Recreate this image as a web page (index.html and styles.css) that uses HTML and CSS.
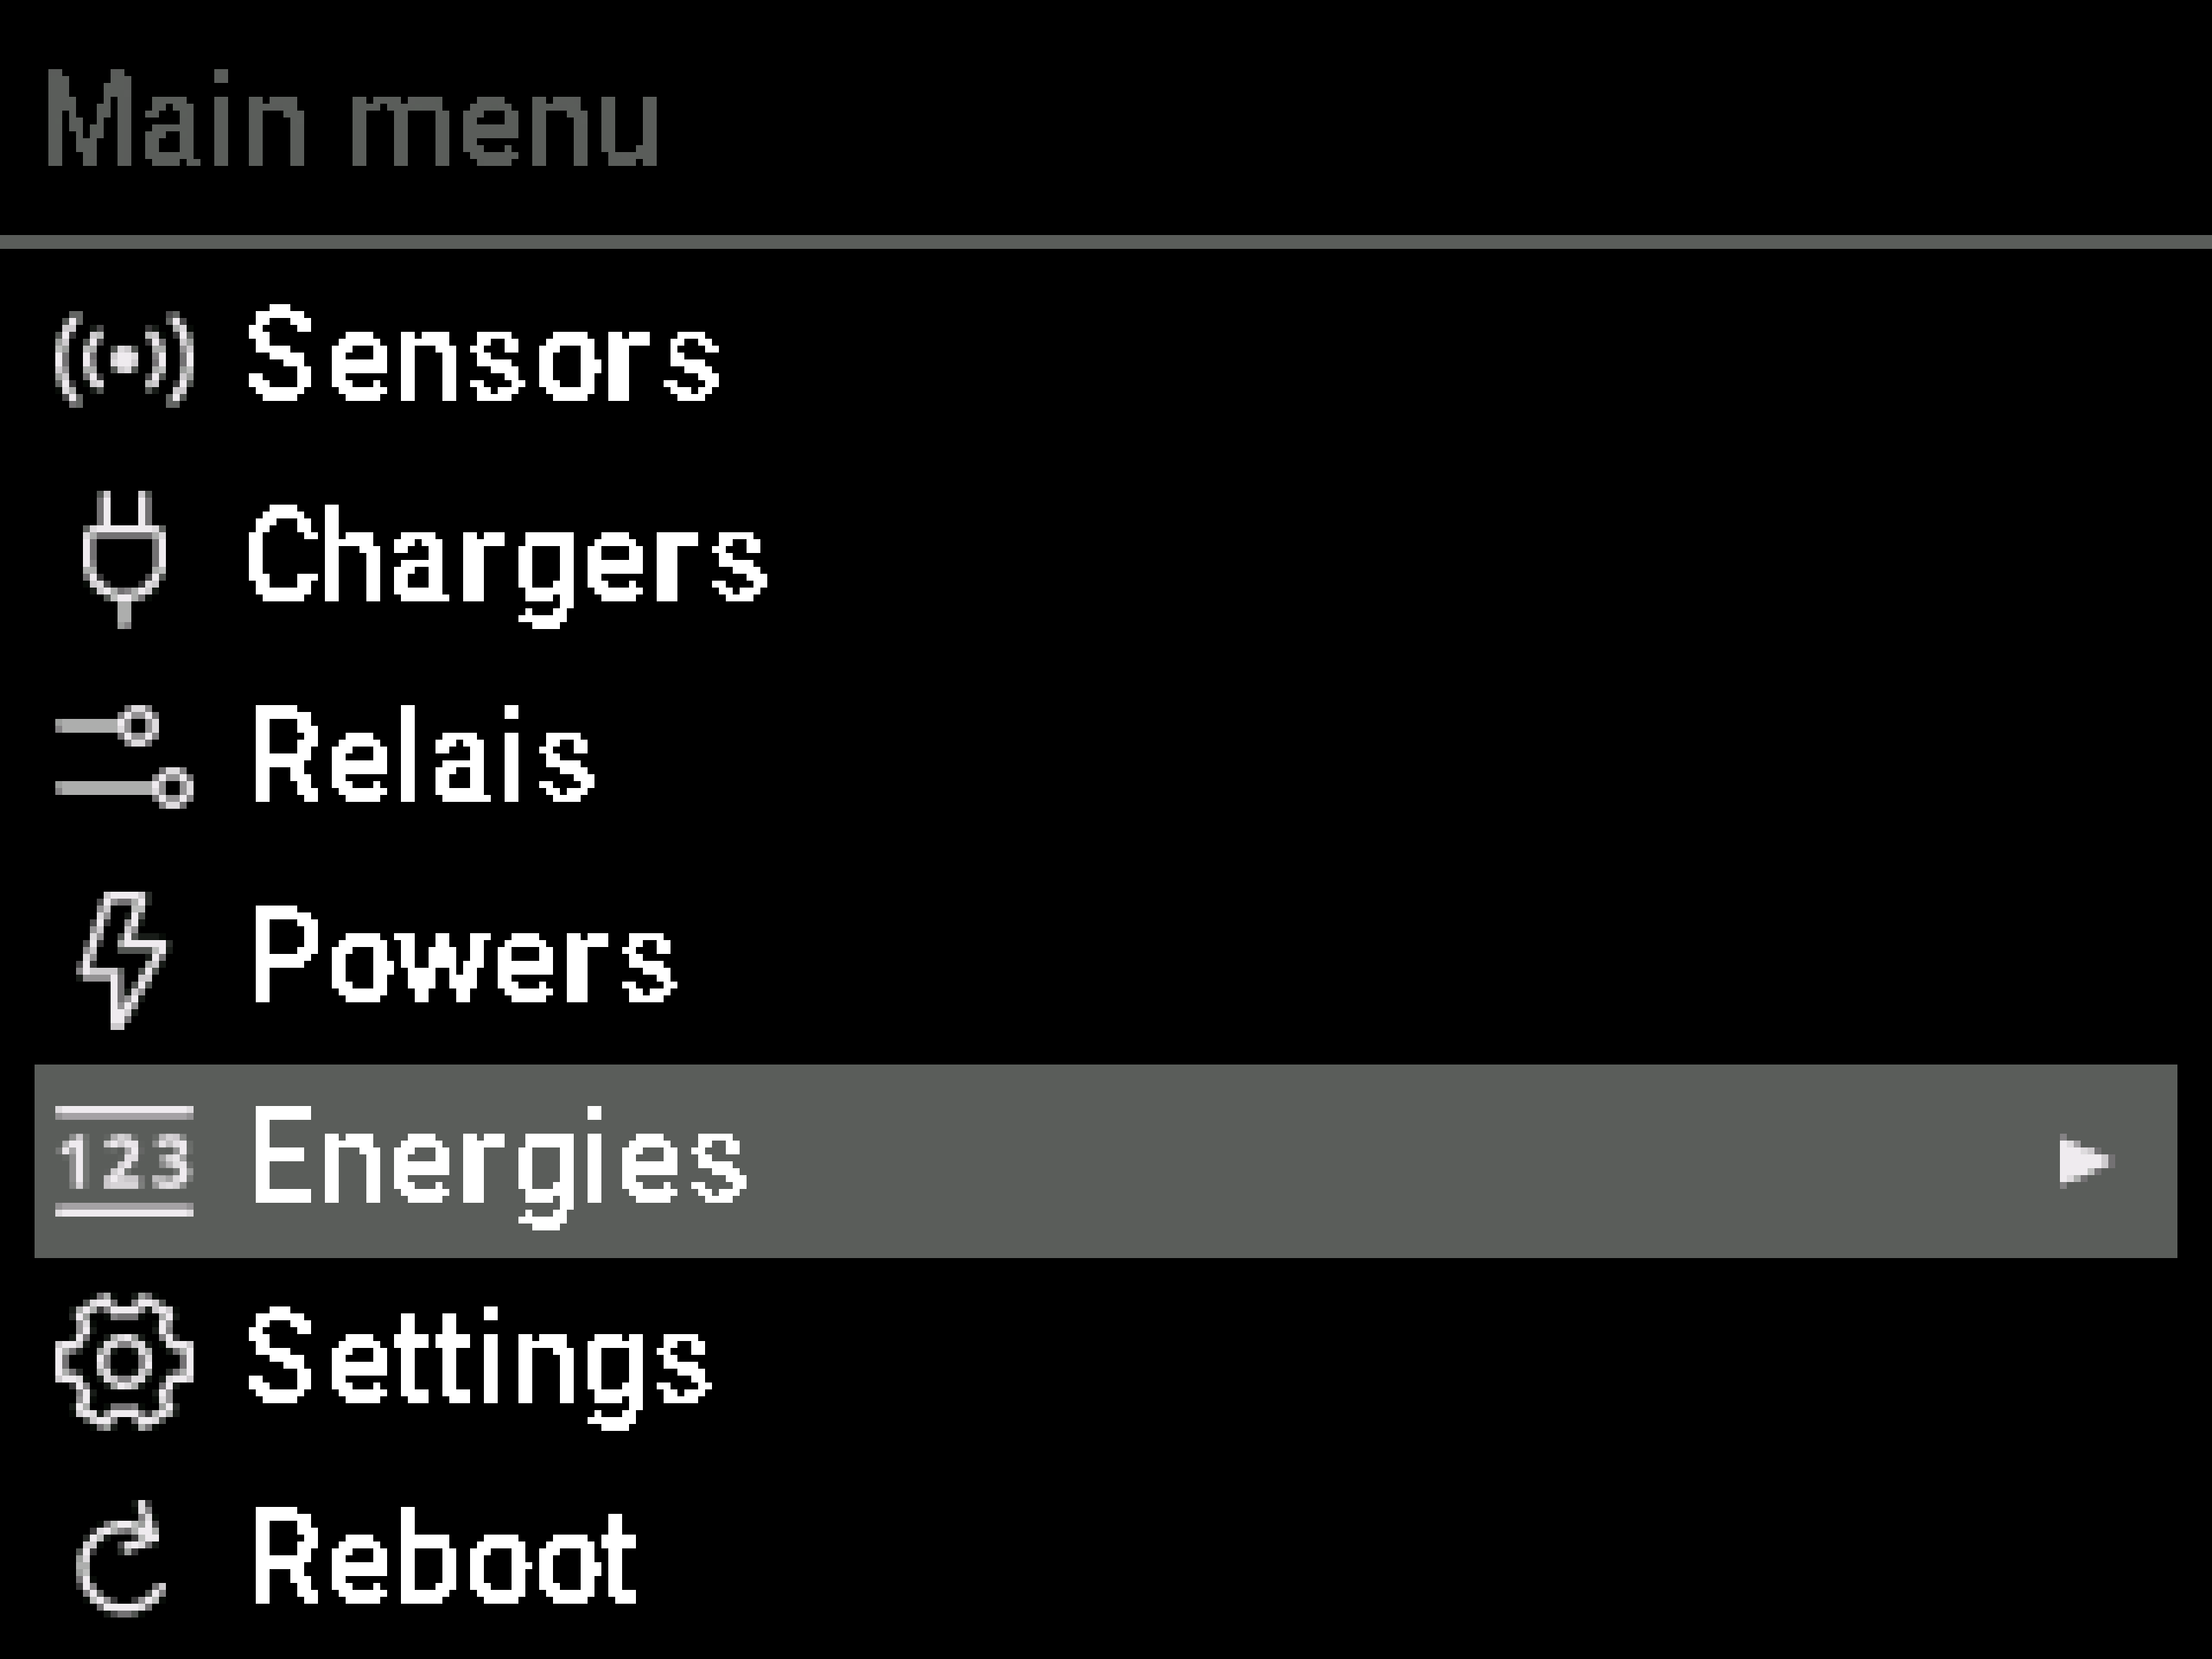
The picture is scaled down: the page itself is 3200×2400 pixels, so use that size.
FILE: index.html
```html
<!DOCTYPE html>
<html lang="en">
<head>
<meta charset="utf-8">
<title>Main menu</title>
<link rel="stylesheet" href="styles.css">
</head>
<body>
<svg class="defs" width="0" height="0" aria-hidden="true">
  <!-- snaps text to the 10px dot grid of the display -->
  <filter id="dots" filterUnits="userSpaceOnUse" x="0" y="60" width="1000" height="220" color-interpolation-filters="sRGB">
    <feGaussianBlur in="SourceGraphic" stdDeviation="1.5"/>
    <feComponentTransfer result="solid"><feFuncA type="discrete" tableValues="0 1"/></feComponentTransfer>
    <feFlood x="4" y="64" width="1" height="1" flood-color="#000"/>
    <feOffset dx="0" dy="0" x="0" y="60" width="10" height="10" result="cell"/>
    <feTile in="cell" result="grid"/>
    <feComposite in="solid" in2="grid" operator="in"/>
    <feMorphology operator="dilate" radius="4" result="nine"/>
    <feOffset in="nine" dx="1" dy="0" result="right"/>
    <feMerge result="wide"><feMergeNode in="nine"/><feMergeNode in="right"/></feMerge>
    <feOffset in="wide" dx="0" dy="1" result="down"/>
    <feMerge><feMergeNode in="wide"/><feMergeNode in="down"/></feMerge>
  </filter>
  <filter id="softdots" filterUnits="userSpaceOnUse" x="0" y="0" width="200" height="200" color-interpolation-filters="sRGB">
    <feGaussianBlur in="SourceGraphic" stdDeviation="2.5" result="soft"/>
    <feFlood x="4" y="4" width="2" height="2" flood-color="#000"/>
    <feOffset dx="0" dy="0" x="0" y="0" width="10" height="10" result="cell"/>
    <feTile in="cell" result="grid"/>
    <feComposite in="soft" in2="grid" operator="in"/>
    <feMorphology operator="dilate" radius="4"/>
  </filter>
</svg>
<div class="screen">
  <header class="header">
    <svg class="title" width="1000" height="280"><g filter="url(#dots)"><text transform="scale(.88 1)" y="200"><tspan x="8" textLength="158" lengthAdjust="spacingAndGlyphs">M</tspan><tspan x="173 284 342 455">ain </tspan><tspan x="511" textLength="180" lengthAdjust="spacingAndGlyphs">m</tspan><tspan x="697 808 922">enu</tspan></text></g></svg>
  </header>
  <main class="menu">
    <div class="item">
      <svg class="icon" data-icon="sensors" viewBox="0 0 20 20"></svg>
      <svg class="label" width="1000" height="280"><g filter="url(#dots)"><text transform="scale(.88 1)" y="200"><tspan x="3 140 251 369">Sens</tspan><tspan x="480" textLength="113" lengthAdjust="spacingAndGlyphs">o</tspan><tspan x="589" textLength="82" lengthAdjust="spacingAndGlyphs">r</tspan><tspan x="688">s</tspan></text></g></svg>
    </div>
    <div class="item">
      <svg class="icon" data-icon="chargers" viewBox="0 0 20 20"></svg>
      <svg class="label" width="1000" height="280"><g filter="url(#dots)"><text transform="scale(.88 1)" y="200"><tspan x="2 126 241">Cha</tspan><tspan x="350" textLength="82" lengthAdjust="spacingAndGlyphs">r</tspan><tspan x="444 560">ge</tspan><tspan x="669" textLength="82" lengthAdjust="spacingAndGlyphs">r</tspan><tspan x="767">s</tspan></text></g></svg>
    </div>
    <div class="item">
      <svg class="icon" data-icon="relais" viewBox="0 0 20 20"></svg>
      <svg class="label" width="1000" height="280"><g filter="url(#dots)"><text transform="scale(.88 1)" x="9 140 250 309 420 483" y="200">Relais</text></g></svg>
    </div>
    <div class="item">
      <svg class="icon" data-icon="powers" viewBox="0 0 20 20"></svg>
      <svg class="label" width="1000" height="280"><g filter="url(#dots)"><text transform="scale(.88 1)" y="200"><tspan x="9">P</tspan><tspan x="139" textLength="113" lengthAdjust="spacingAndGlyphs">o</tspan><tspan x="248" textLength="162" lengthAdjust="spacingAndGlyphs">w</tspan><tspan x="412">e</tspan><tspan x="521" textLength="82" lengthAdjust="spacingAndGlyphs">r</tspan><tspan x="619">s</tspan></text></g></svg>
    </div>
    <div class="item selected">
      <svg class="icon" data-icon="energies" viewBox="0 0 20 20">
        <g class="digits" transform="scale(.1)" filter="url(#softdots)"><text x="0 68 140" y="137">123</text></g>
      </svg>
      <svg class="label" width="1000" height="280"><g filter="url(#dots)"><text transform="scale(.88 1)" y="200"><tspan x="9 126 242">Ene</tspan><tspan x="350" textLength="82" lengthAdjust="spacingAndGlyphs">r</tspan><tspan x="444 557 617 733">gies</tspan></text></g></svg>
      <svg class="arrow" data-icon="arrow" viewBox="0 0 8 8"></svg>
    </div>
    <div class="item">
      <svg class="icon" data-icon="settings" viewBox="0 0 20 20"></svg>
      <svg class="label" width="1000" height="280"><g filter="url(#dots)"><text transform="scale(.88 1)" x="3 140 247 315 386 444 557 676" y="200">Settings</text></g></svg>
    </div>
    <div class="item">
      <svg class="icon" data-icon="reboot" viewBox="0 0 20 20"></svg>
      <svg class="label" width="1000" height="280"><g filter="url(#dots)"><text transform="scale(.88 1)" y="200"><tspan x="9 140 250">Reb</tspan><tspan x="366" textLength="113" lengthAdjust="spacingAndGlyphs">o</tspan><tspan x="480" textLength="113" lengthAdjust="spacingAndGlyphs">o</tspan><tspan x="586">t</tspan></text></g></svg>
    </div>
  </main>
</div>
<script src="icons.js"></script>
</body>
</html>
```
FILE: styles.css
```css
* { box-sizing: border-box; }
body {
  margin: 0;
  background: #000;
  font-family: Roboto, "Liberation Sans", sans-serif;
}
.defs { position: absolute; }
.screen {
  width: 3200px;
  height: 2400px;
  overflow: hidden;
  display: flex;
  flex-direction: column;
  background: #000;
}
.header {
  height: 360px;
  padding: 40px 0 0 50px;
  border-bottom: 20px solid #5a5d5a;
}
.title, .label {
  display: block;
  flex: none;
  font-size: 193px;
  font-weight: 500;
  fill: #fff;
}
.title { fill: #5a5d5a; }
.menu {
  display: flex;
  flex-direction: column;
  gap: 10px;
  padding: 20px 50px 0;
}
.item {
  height: 280px;
  padding: 0 90px 0 30px;
  display: flex;
  align-items: center;
  gap: 70px;
}
.selected { background: #5a5d5a; }
.icon {
  display: block;
  flex: none;
  width: 200px;
  height: 200px;
  shape-rendering: crispEdges;
}
.arrow {
  display: block;
  width: 80px;
  height: 80px;
  margin-left: auto;
  shape-rendering: crispEdges;
}
.digits {
  fill: #efebef;
  font-family: "Noto Sans", sans-serif;
  font-size: 102px;
  font-weight: 700;
}
```
FILE: icons.js
```js
// Each character is one display dot; the letter or digit selects its shade.
const shades = {
  W: '#efebef', d: '#dedbde', c: '#cecbce', b: '#bdbebd', a: '#adaead',
  x: '#a5a2a5', 9: '#9c9e9c', m: '#949294', 8: '#848284', 7: '#737173',
  6: '#636563', 5: '#525552', 4: '#4a494a', 3: '#393839', 2: '#292c29',
  1: '#181c18', 0: '#080c08'
};
const icons = {
  sensors: { top: 3, rows: [
    '..66............46..',
    '.5W6............6W4.',
    '.cc..14......31..ad0',
    '5W3..cb......bc0.3W6',
    '9c..5W4......3W7..c9',
    'b9..ba..5dc5..aa..mc',
    'W7..W7..cWWd..8W..7W',
    'W7..W8..dWWc..7W..7W',
    'cm..aa..5cd5..ab..9b',
    '9c..7W3......4W5..c9',
    '6W3.0cd......bc..3W5',
    '0da..15......51..cc.',
    '.4W6............6W5.',
    '..76............66..'] },
  chargers: { top: 0, rows: [
    '......5c....c5......',
    '......7W....W7......',
    '......7W....W7......',
    '......7W....W7......',
    '......7W....W7......',
    '....6dWWWWWWWWd6....',
    '....da77777777ad....',
    '....W7........7W....',
    '....W7........7W....',
    '....W7........7W....',
    '....W8........7W....',
    '....aa........ab....',
    '....7W3......4W5....',
    '....0cd4....3dc.....',
    '.....1cWa78aWc1.....',
    '.......5bWWa70......',
    '.........aa.........',
    '.........aa.........',
    '.........aa.........',
    '.........98.........'] },
  relais: { top: 2, rows: [
    '..........7dd8......',
    '.........8WmmW7.....',
    '9aaaaaaaaWm..md.....',
    '8aaaaaaaadm..md.....',
    '.........7WmmW8.....',
    '..........8dd7......',
    '', '', '',
    '...............7dd8.',
    '..............8WmmW7',
    '9aaaaaaaaaaaaaWm..md',
    '8aaaaaaaaaaaaadm..md',
    '..............7WmmW8',
    '...............8dd7.'] },
  powers: { top: 0, rows: [
    '.......cWWWWc2......',
    '......4Wm77aW2......',
    '......mc...bb.......',
    '......dm..1W5.......',
    '.....4W3..mW1.......',
    '.....mc...cm........',
    '.....dm..5W51110....',
    '....4W3..aWWWWWW2...',
    '....mc...55555bW1...',
    '....dm.......1W7....',
    '...4W3.......ac1....',
    '...8Wcccc6..5W5.....',
    '...1mmmmW7..cc......',
    '........W7.5W5......',
    '........W71cm.......',
    '........W7mW1.......',
    '........WmWm........',
    '........WWc1........',
    '........WW7.........',
    '........cc..........'] },
  energies: { top: 2, rows: [
    'dWWWWWWWWWWWWWWWWWWd',
    'mxxxxxxxxxxxxxxxxxxm',
    '', '', '', '', '', '', '', '', '', '', '', '',
    'mxxxxxxxxxxxxxxxxxxm',
    'dWWWWWWWWWWWWWWWWWWd'] },
  settings: { top: 0, rows: [
    '.....07a0..1970.....',
    '....5dWW7..8WWc5....',
    '..1aWa38WWWWm1cWc0..',
    '..2W9..087770..aW1..',
    '...md0........0Wm...',
    '...mW1........1W8...',
    '..1W7..1adW91..8W3..',
    'cWWc1.1dd88cd1.0dWWc',
    'Wa72..9c1..1da..17aW',
    'W7....W8....8d....7W',
    'W7....d8....8W....7W',
    'Wa72..ad1..1c9..27aW',
    'cWWd0.1dc88dd1.1dWWc',
    '..3W8..19Wda1..7W1..',
    '...8W1........1Wm...',
    '...mW0........0dm...',
    '..1Wa..077780..9W2..',
    '..0cWd1mWWWW83aWa1..',
    '....5cWW8..7WWd5....',
    '.....0791..0a70.....'] },
  reboot: { top: 1, rows: [
    '...........1d3......',
    '...........0d8......',
    '............8d0.....',
    '......07bWWb9W4.....',
    '.....3dWa87aWWa.....',
    '....2Wb1...3bWW.....',
    '....cc0..4dWd71.....',
    '...5W3...293........',
    '...9d...............',
    '...aa...............',
    '...9b...............',
    '...7W0..............',
    '...3W8........7c....',
    '....8W6......5W8....',
    '....0bWm3..3mWb0....',
    '......7WWWWWd7......',
    '.......147750.......'] },
  arrow: { top: 0, rows: [
    '8.......',
    'Wdx.....',
    'WWWdc7..',
    'WWWWWWc7',
    'WWWWWWc7',
    'WWWWb7..',
    'Wda7....',
    '8.......'] }
};
document.querySelectorAll('[data-icon]').forEach((svg) => {
  const { top, rows } = icons[svg.dataset.icon];
  rows.forEach((row, y) => [...row].forEach((dot, x) => {
    if (dot === '.') return;
    const rect = document.createElementNS('http://www.w3.org/2000/svg', 'rect');
    rect.setAttribute('x', x);
    rect.setAttribute('y', y + top);
    rect.setAttribute('width', 1);
    rect.setAttribute('height', 1);
    rect.setAttribute('fill', shades[dot]);
    svg.append(rect);
  }));
});
```
